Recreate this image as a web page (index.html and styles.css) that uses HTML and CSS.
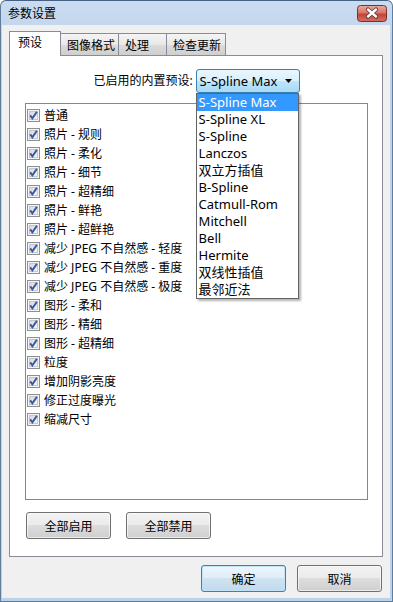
FILE: index.html
```html
<!DOCTYPE html>
<html lang="zh-CN">

<head>
  <meta charset="UTF-8">
  <meta name="viewport" content="width=device-width, initial-scale=1.0">
  <title>参数设置</title>
  <link rel="stylesheet" href="styles.css">
</head>

<body>
  <svg class="defs" width="0" height="0">
    <defs>
      <linearGradient id="ckfill" x1="0" y1="0" x2="1" y2="1">
        <stop offset="0" stop-color="#d6d8dc" />
        <stop offset="1" stop-color="#f7f7f7" />
      </linearGradient>
      <linearGradient id="closefill" x1="0" y1="0" x2="0" y2="1">
        <stop offset="0" stop-color="#e9aaa0" />
        <stop offset="0.45" stop-color="#d9776b" />
        <stop offset="0.55" stop-color="#c4453a" />
        <stop offset="1" stop-color="#d3705f" />
      </linearGradient>
      <symbol id="ck" viewBox="0 0 13 13">
        <rect x="0.5" y="0.5" width="12" height="12" fill="#f4f4f4" stroke="#8e8f8f" />
        <rect x="2.5" y="2.5" width="8" height="8" fill="url(#ckfill)" stroke="#c3c6cb" />
        <path d="M3.2 6.3 L5.4 9.3 L9.9 2.8" fill="none" stroke="#3b59a0" stroke-width="2" />
      </symbol>
    </defs>
  </svg>

  <div class="window">
    <div class="titlebar">
      <span class="title">参数设置</span>
      <span class="close">
        <svg width="30" height="17" viewBox="0 0 30 17">
          <rect x="0.5" y="0.5" width="29" height="16" rx="3" fill="url(#closefill)" stroke="#7b302a" />
          <path d="M11 4.5 L19 11.5 M19 4.5 L11 11.5" stroke="#5d3a3a" stroke-width="4.2" stroke-linecap="round" />
          <path d="M11 4.5 L19 11.5 M19 4.5 L11 11.5" stroke="#ffffff" stroke-width="2.4" stroke-linecap="round" />
        </svg>
      </span>
    </div>

    <div class="client">
      <div class="tabs">
        <div class="tab active tab-preset">预设</div>
        <div class="tab tab-format">图像格式</div>
        <div class="tab tab-process">处理</div>
        <div class="tab tab-update">检查更新</div>
      </div>

      <div class="page">
        <div class="preset-row">
          <span class="preset-label">已启用的内置预设:</span>
          <div class="combo">
            <div class="combo-box">
              <span>S-Spline Max</span>
              <svg class="arrow" width="7" height="4" viewBox="0 0 7 4">
                <path d="M0 0 H7 L3.5 4 Z" fill="#000" />
              </svg>
            </div>
            <ul class="combo-list">
              <li class="selected">S-Spline Max</li>
              <li>S-Spline XL</li>
              <li>S-Spline</li>
              <li>Lanczos</li>
              <li>双立方插值</li>
              <li>B-Spline</li>
              <li>Catmull-Rom</li>
              <li>Mitchell</li>
              <li>Bell</li>
              <li>Hermite</li>
              <li>双线性插值</li>
              <li>最邻近法</li>
            </ul>
          </div>
        </div>

        <div class="checklist">
          <div class="item"><svg class="ck"><use href="#ck" /></svg>普通</div>
          <div class="item"><svg class="ck"><use href="#ck" /></svg>照片 - 规则</div>
          <div class="item"><svg class="ck"><use href="#ck" /></svg>照片 - 柔化</div>
          <div class="item"><svg class="ck"><use href="#ck" /></svg>照片 - 细节</div>
          <div class="item"><svg class="ck"><use href="#ck" /></svg>照片 - 超精细</div>
          <div class="item"><svg class="ck"><use href="#ck" /></svg>照片 - 鲜艳</div>
          <div class="item"><svg class="ck"><use href="#ck" /></svg>照片 - 超鲜艳</div>
          <div class="item"><svg class="ck"><use href="#ck" /></svg>减少 JPEG 不自然感 - 轻度</div>
          <div class="item"><svg class="ck"><use href="#ck" /></svg>减少 JPEG 不自然感 - 重度</div>
          <div class="item"><svg class="ck"><use href="#ck" /></svg>减少 JPEG 不自然感 - 极度</div>
          <div class="item"><svg class="ck"><use href="#ck" /></svg>图形 - 柔和</div>
          <div class="item"><svg class="ck"><use href="#ck" /></svg>图形 - 精细</div>
          <div class="item"><svg class="ck"><use href="#ck" /></svg>图形 - 超精细</div>
          <div class="item"><svg class="ck"><use href="#ck" /></svg>粒度</div>
          <div class="item"><svg class="ck"><use href="#ck" /></svg>增加阴影亮度</div>
          <div class="item"><svg class="ck"><use href="#ck" /></svg>修正过度曝光</div>
          <div class="item"><svg class="ck"><use href="#ck" /></svg>缩减尺寸</div>
        </div>

        <div class="page-buttons">
          <button class="btn">全部启用</button>
          <button class="btn">全部禁用</button>
        </div>
      </div>

      <div class="dialog-buttons">
        <button class="btn default">确定</button>
        <button class="btn">取消</button>
      </div>
    </div>
  </div>
</body>

</html>
```

FILE: styles.css
```css
body {
  margin: 0;
  font-family: "Noto Sans", "Noto Sans CJK SC", sans-serif;
  font-size: 12px;
  color: #000;
  background: #fff;
}

.defs {
  display: block;
  width: 0;
  height: 0;
  overflow: hidden;
}

.window {
  width: 393px;
  height: 602px;
  box-sizing: border-box;
  display: flex;
  flex-direction: column;
  background: linear-gradient(#cadcf1, #bed3ec 40px, #bcd2eb);
  border: 1px solid #5f7d9f;
  border-top-color: #46607f;
  border-radius: 6px 6px 0 0;
}

.titlebar {
  height: 24px;
  display: flex;
  align-items: center;
  justify-content: space-between;
  padding: 0 5px 0 7px;
}

.title {
  line-height: 16px;
  padding-top: 2px;
}

.close {
  display: flex;
}

.client {
  flex: 1;
  background: #f0f0f0;
  margin: 0 2px 3px 1px;
  display: flex;
  flex-direction: column;
}

/* tabs */
.tabs {
  display: flex;
  align-items: flex-end;
  height: 24px;
  margin-top: 6px;
  padding-left: 7px;
  position: relative;
  z-index: 1;
}

.tab {
  box-sizing: border-box;
  height: 22px;
  padding: 3px 0 0 6px;
  line-height: 17px;
  border: 1px solid #898c95;
  border-bottom: none;
  background: linear-gradient(#f5f5f5, #e8e8e8 50%, #dadada 55%, #cfcfcf);
  margin-left: -1px;
}

.tab.active {
  height: 25px;
  padding: 2px 0 0 8px;
  background: #fff;
  margin-bottom: -1px;
  margin-left: 0;
  position: relative;
  z-index: 2;
}

.tab-preset { width: 52px; }
.tab-format { width: 59px; }
.tab-process { width: 49px; }
.tab-update { width: 60px; }

/* tab page */
.page {
  box-sizing: border-box;
  width: 374px;
  height: 502px;
  margin-left: 7px;
  background: #fff;
  border: 1px solid #898c95;
  display: flex;
  flex-direction: column;
}

.preset-row {
  display: flex;
  justify-content: center;
  align-items: center;
  gap: 3px;
  margin-top: 13px;
  height: 24px;
  padding-left: 1px;
}

.preset-label {
  line-height: 16px;
}

.combo {
  position: relative;
}

.combo-box {
  box-sizing: border-box;
  width: 104px;
  height: 24px;
  display: flex;
  align-items: center;
  justify-content: space-between;
  padding: 0 7px 0 3px;
  border: 1px solid #3c7fb1;
  border-radius: 3px;
  background: linear-gradient(#eaf6fd, #d9f0fc 50%, #bee6fd 50%, #a7d9f5);
  font-size: 13px;
}

.combo-list {
  position: absolute;
  top: 24px;
  left: 0;
  width: 103px;
  box-sizing: border-box;
  margin: 0;
  padding: 0;
  list-style: none;
  background: #fff;
  border: 1px solid #646464;
  box-shadow: 2px 2px 2px rgba(0, 0, 0, 0.3);
  z-index: 5;
  font-size: 13px;
}

.combo-list li {
  height: 17px;
  line-height: 17px;
  padding-left: 2px;
  white-space: nowrap;
}

.combo-list li.selected {
  background: #3399ff;
  color: #fff;
}

/* check list */
.checklist {
  box-sizing: border-box;
  width: 343px;
  height: 397px;
  margin: 10px 0 0 15px;
  padding: 2px 1px;
  border: 1px solid #828790;
}

.item {
  height: 19px;
  display: flex;
  align-items: center;
  gap: 4px;
  line-height: 16px;
  white-space: nowrap;
}

.ck {
  width: 13px;
  height: 13px;
  flex: none;
}

/* buttons */
.btn {
  box-sizing: border-box;
  width: 85px;
  height: 27px;
  padding: 0;
  font: inherit;
  color: #000;
  border: 1px solid #707070;
  border-radius: 3px;
  background: linear-gradient(#f2f2f2, #ebebeb 50%, #dddddd 50%, #cfcfcf);
  box-shadow: inset 0 0 0 1px rgba(255, 255, 255, 0.6);
}

.btn.default {
  border-color: #3c7fb1;
  background: linear-gradient(#edf5fb, #dfedf7 50%, #cfe3f1 50%, #c2daec);
  box-shadow: inset 0 0 0 1px #bfe4f8;
}

.page-buttons {
  display: flex;
  gap: 15px;
  margin: 12px 0 0 16px;
}

.dialog-buttons {
  display: flex;
  justify-content: flex-end;
  gap: 11px;
  margin-top: 8px;
  padding-right: 8px;
}
```
